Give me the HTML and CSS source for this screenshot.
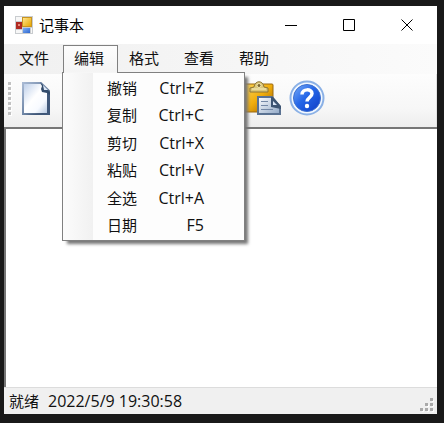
FILE: index.html
```html
<!DOCTYPE html>
<html lang="zh-CN">
<head>
<meta charset="utf-8">
<title>记事本</title>
<link rel="stylesheet" href="styles.css">
</head>
<body>
<main class="window">
  <header class="titlebar">
    <svg class="app-icon" viewBox="0 0 18 18" aria-hidden="true">
      <defs>
        <linearGradient id="gold" x2="1" y2="1"><stop stop-color="#ffe48c"/><stop offset="1" stop-color="#e8a800"/></linearGradient>
        <linearGradient id="blue" x2="1" y2="1"><stop stop-color="#7fb0f4"/><stop offset="1" stop-color="#2e66cf"/></linearGradient>
      </defs>
      <path fill="#c9cccf" d="M0 0h18v18H0z"/>
      <path fill="#f7f7f7" d="M1 1h6v4H1zM1 14h6v3H1zM16 12h1v5h-1z"/>
      <path fill="#b02a22" d="M1 6h6v7H1z"/><path fill="#e88a7c" d="M3 8h2v2H3z"/>
      <path fill="#c89420" d="M7 1h10v10H7z"/><path fill="url(#gold)" d="M8 2h8v8H8z"/>
      <path fill="url(#blue)" d="M8 12h7v5H8z"/>
    </svg>
    <h1 class="title">记事本</h1>
    <div class="window-buttons">
      <button class="window-button" aria-label="最小化"><svg viewBox="0 0 12 12"><path d="M0 6.500h12"/></svg></button>
      <button class="window-button" aria-label="最大化"><svg viewBox="0 0 12 12"><path d="M.5.5h11v11H.5z"/></svg></button>
      <button class="window-button" aria-label="关闭"><svg viewBox="0 0 12 12"><path d="M.5.5l11 11M11.500.5l-11 11"/></svg></button>
    </div>
  </header>
  <nav class="menubar">
    <button class="menu-button">文件</button>
    <div class="menu-holder">
      <button class="menu-button open" aria-expanded="true">编辑</button>
      <div class="dropdown" role="menu">
        <button class="menu-item" role="menuitem"><span>撤销</span><kbd>Ctrl+Z</kbd></button>
        <button class="menu-item" role="menuitem"><span>复制</span><kbd>Ctrl+C</kbd></button>
        <button class="menu-item" role="menuitem"><span>剪切</span><kbd>Ctrl+X</kbd></button>
        <button class="menu-item" role="menuitem"><span>粘贴</span><kbd>Ctrl+V</kbd></button>
        <button class="menu-item" role="menuitem"><span>全选</span><kbd>Ctrl+A</kbd></button>
        <button class="menu-item" role="menuitem"><span>日期</span><kbd>F5</kbd></button>
      </div>
    </div>
    <button class="menu-button">格式</button>
    <button class="menu-button">查看</button>
    <button class="menu-button">帮助</button>
  </nav>
  <div class="toolbar" role="toolbar">
    <svg class="grip" viewBox="0 0 4 34" aria-hidden="true">
      <path fill="#fff" d="M1 1h3v3H1zM1 6h3v3H1zM1 11h3v3H1zM1 16h3v3H1zM1 21h3v3H1zM1 26h3v3H1zM1 31h3v3H1z"/>
      <path fill="#c2c2c2" d="M0 0h3v3H0zM0 5h3v3H0zM0 10h3v3H0zM0 15h3v3H0zM0 20h3v3H0zM0 25h3v3H0zM0 30h3v3H0z"/>
    </svg>
    <button class="tool" aria-label="新建">
      <svg viewBox="0 0 38 38">
        <defs><linearGradient id="page" x2="1" y2="1"><stop stop-color="#b9cce8"/><stop offset=".45" stop-color="#fff"/><stop offset=".7" stop-color="#f7faff"/><stop offset="1" stop-color="#a9bfdc"/></linearGradient>
        <linearGradient id="edge" x2="1" y2="1"><stop stop-color="#a8b9d3"/><stop offset=".5" stop-color="#6f86a6"/><stop offset="1" stop-color="#2c425f"/></linearGradient></defs>
        <path d="M5 3h18l8 8v23H5z" fill="url(#page)" stroke="url(#edge)" stroke-width="2"/>
        <path d="M29 12h3v23H8l21-2z" fill="#40587a"/>
        <path d="M22 2l10 10v3l-3-2-5-1-1-3 1-3z" fill="#324b6b"/>
        <path d="M25 5l5 5h-4z" fill="#dce7f7"/>
      </svg>
    </button>
    <div class="tool-space"></div>
    <button class="tool" aria-label="粘贴">
      <svg viewBox="0 0 38 38">
        <defs><linearGradient id="board" x2="1" y2="1"><stop stop-color="#ffd75a"/><stop offset=".5" stop-color="#f0ad0c"/><stop offset="1" stop-color="#9a5c00"/></linearGradient>
        <linearGradient id="note" x2="1" y2="1"><stop stop-color="#fff"/><stop offset="1" stop-color="#8fa7c6"/></linearGradient></defs>
        <rect x="1" y="4" width="29" height="28" rx="1" fill="url(#board)" stroke="#9a6810"/>
        <path d="M7 12V8l4-1c1-7 9-7 10 0l4 1v4z" fill="#dcc777" stroke="#8c7538"/>
        <path d="M9 9h14" stroke="#f7efc4"/>
        <circle cx="16" cy="5.500" r="2" fill="#7d6833" stroke="#f2e6ad"/>
        <path d="M15 17h14l8 10v7H15z" fill="url(#note)" stroke="#5a7292" stroke-width="2"/>
        <path d="M28 17h2l8 9v3l-10-2z" fill="#3e5573"/>
        <path d="M30 21l4 4h-4z" fill="#dce7f7"/>
        <path d="M18 21.500h7M18 25.500h7M18 29.500h12" stroke="#7488a6"/>
      </svg>
    </button>
    <button class="tool" aria-label="帮助主题">
      <svg viewBox="0 0 38 38">
        <defs><linearGradient id="ball" x2="1" y2="1"><stop stop-color="#79adf8"/><stop offset=".45" stop-color="#2667e8"/><stop offset="1" stop-color="#0d3bc4"/></linearGradient></defs>
        <circle cx="20" cy="18" r="16.500" fill="#f2f8ff" stroke="#8bb1e6" stroke-width="2"/>
        <circle cx="20" cy="18" r="13.500" fill="url(#ball)" stroke="#3d70cf"/>
        <path d="M15 14.500c0-6 10-6 10-1 0 4-5 4-5 8" fill="none" stroke="#fff" stroke-width="3.500"/>
        <circle cx="20" cy="26" r="2.200" fill="#fff"/>
      </svg>
    </button>
  </div>
  <textarea class="editor" aria-label="文本"></textarea>
  <footer class="statusbar">
    <span>就绪</span>
    <time>2022/5/9 19:30:58</time>
    <svg class="resize" viewBox="0 0 14 14" aria-hidden="true">
      <path fill="#fff" d="M12 2h2v2h-2zM12 7h2v2h-2zM12 12h2v2h-2zM7 7h2v2H7zM7 12h2v2H7zM2 12h2v2H2z"/>
      <path fill="#aaa" d="M10 0h3v3h-3zM10 5h3v3h-3zM10 10h3v3h-3zM5 5h3v3H5zM5 10h3v3H5zM0 10h3v3H0z"/>
    </svg>
  </footer>
</main>
</body>
</html>
```
FILE: styles.css
```css
* {
  box-sizing: border-box;
}

body {
  margin: 0;
  height: 100vh;
  padding: 6px 7px 9px 4px;
  background: #191919;
  color: #111;
  font: 15px/20px "Noto Sans CJK SC", sans-serif;
}

button {
  margin: 0;
  padding: 0;
  border: 0;
  background: none;
  color: inherit;
  font: inherit;
}

svg {
  display: block;
}

.window {
  display: flex;
  flex-direction: column;
  height: 100%;
  background: #fff;
}

.titlebar {
  display: flex;
  align-items: center;
  height: 38px;
  padding: 0 1px 0 11px;
}

.app-icon {
  width: 18px;
  height: 18px;
}

.title {
  flex: 1;
  margin: 0 0 0 6px;
  color: #000;
  font-size: 15px;
  font-weight: 400;
}

.window-buttons {
  display: flex;
}

.window-button {
  display: grid;
  place-items: center;
  width: 58px;
  height: 38px;
}

.window-button svg {
  width: 12px;
  height: 12px;
  fill: none;
  stroke: #000;
}

.menubar {
  display: flex;
  height: 30px;
  padding: 1px 4px;
  background: linear-gradient(90deg, #f0f0f0, #fbfbfb);
}

.menu-holder {
  position: relative;
}

.menu-button {
  width: 55px;
  height: 28px;
  padding: 0 14px 2px 11px;
  text-align: left;
}

.menu-button.open {
  padding: 0 13px 3px 10px;
  border: 1px solid #808080;
  border-bottom: 0;
  background: linear-gradient(#fdfdfd, #f4f4f4);
}

.dropdown {
  position: absolute;
  z-index: 1;
  top: 27px;
  left: -1px;
  display: grid;
  grid-auto-rows: 1fr;
  width: 183px;
  height: 169px;
  padding: 1px;
  border: 1px solid #808080;
  background: linear-gradient(90deg, #fcfcfc, #f1f1f1 30px, #fdfdfd 30px);
  box-shadow: 4px 4px 3px -1px #777;
}

.dropdown::before {
  content: "";
  position: absolute;
  top: -1px;
  left: 1px;
  width: 53px;
  height: 1px;
  background: #f6f6f6;
}

.menu-item {
  display: flex;
  align-items: center;
  justify-content: space-between;
  padding: 0 39px 0 43px;
}

.menu-item kbd {
  font: 16px/20px "Open Sans", sans-serif;
}

.toolbar {
  display: flex;
  align-items: center;
  height: 53px;
  padding: 0 4px 4px;
  border-right: 1px solid #e2e2e2;
  background: linear-gradient(#fdfdfd, #f7f7f7 65%, #ededed);
}

.grip {
  width: 4px;
  height: 34px;
}

.tool {
  margin-left: 6px;
}

.tool svg {
  width: 38px;
  height: 38px;
}

.tool-space {
  width: 181px;
}

.editor {
  flex: 1;
  min-height: 0;
  padding: 2px;
  border: 0 solid #767676;
  border-width: 2px 0 0 2px;
  outline: 0;
  background: #fff;
  color: #000;
  font: inherit;
  resize: none;
}

.statusbar {
  display: flex;
  align-items: center;
  height: 27px;
  padding: 0 3px 0 5px;
  border-top: 1px solid #dcdcdc;
  background: #f0f0f0;
}

.statusbar time {
  flex: 1;
  margin-left: 9px;
  font: 16px/20px "Open Sans", sans-serif;
}

.resize {
  align-self: flex-end;
  width: 14px;
  height: 14px;
  margin-bottom: 2px;
}
```
